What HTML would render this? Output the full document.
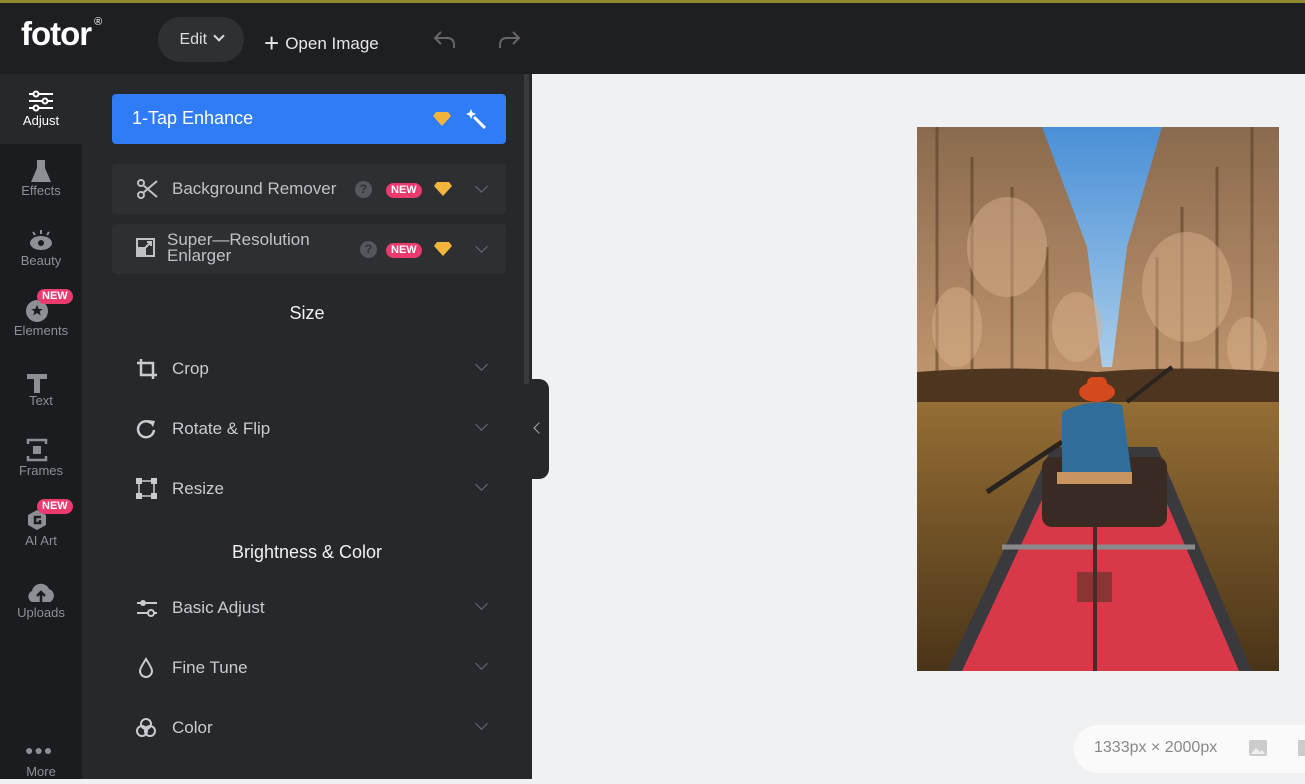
<!DOCTYPE html>
<html><head><meta charset="utf-8"><style>
*{margin:0;padding:0;box-sizing:border-box}
body{width:1305px;height:779px;overflow:hidden;font-family:"Liberation Sans",sans-serif;background:#f0f1f3;position:relative}
.top{position:absolute;left:0;top:0;width:1305px;height:74px;background:#1d1f23;border-top:3px solid #8c8a2e}
.logo{position:absolute;left:21px;top:12px;color:#fff;font-size:33px;font-weight:bold;letter-spacing:-1px}
.logo sup{font-size:11px;font-weight:normal;position:relative;top:-8px;margin-left:3px}
.edit{position:absolute;left:158px;top:14px;width:86px;height:45px;border-radius:23px;background:#2e3034;color:#ddd;font-size:16px;line-height:45px;text-align:center}
.open{position:absolute;left:264px;top:25px;color:#e6e6e6;font-size:17px}
.rail{position:absolute;left:0;top:74px;width:82px;height:705px;background:#1b1c1f}
.ri{position:absolute;left:0;width:82px;height:70px;text-align:center;color:#8d8f94;font-size:13px}
.ri .lb{position:absolute;left:0;right:0;top:39px}
.ri svg{position:absolute;left:26px;top:12px}
.new{position:absolute;background:#ea3a6e;color:#fff;font-size:11px;font-weight:bold;border-radius:8px;padding:1px 5px;line-height:13px}
.panel{position:absolute;left:82px;top:74px;width:450px;height:705px;background:#27282c}
.enh{position:absolute;left:30px;top:20px;width:394px;height:50px;background:#2f7cf6;border-radius:4px;color:#fff;font-size:18px;line-height:48px;padding-left:20px}
.card{position:absolute;left:30px;width:394px;height:50px;background:#2e2f33;border-radius:4px;color:#bfc1c5;font-size:17px}
.row{position:absolute;left:30px;width:394px;height:50px;color:#c9cbcf;font-size:17px}
.row .t,.card .t{position:absolute;left:60px;top:15px}
.row .t{top:17px}
.ic{position:absolute;left:24px;top:14px}
.row .ic{top:16px}
.chev{position:absolute;right:20px;top:18px;width:9px;height:9px;border-right:1.5px solid #6b6d72;border-bottom:1.5px solid #6b6d72;transform:rotate(45deg)}
.h{position:absolute;left:0;width:450px;text-align:center;color:#f0f0f0;font-size:18px}
.q{position:absolute;width:17px;height:17px;border-radius:50%;background:#55575c;color:#2e2f33;font-size:12px;font-weight:bold;text-align:center;line-height:17px}
.scroll{position:absolute;left:524px;top:74px;width:5px;height:310px;background:#3a3b3f;border-radius:2px}
.tab{position:absolute;left:532px;top:379px;width:17px;height:100px;background:#27282c;border-radius:0 10px 10px 0}
.info{position:absolute;left:1074px;top:725px;width:260px;height:48px;border-radius:24px;background:#fafafb;color:#888;font-size:16px;line-height:46px;padding-left:20px}
</style></head><body>
<div class="top">
<div class="logo">fotor<sup>®</sup></div>
<div class="edit">Edit <span style="display:inline-block;width:8px;height:8px;border-right:2px solid #ddd;border-bottom:2px solid #ddd;transform:rotate(45deg);position:relative;top:-4px;margin-left:3px"></span></div>
<div class="open"><span style="font-size:26px;vertical-align:-3px;margin-right:6px">+</span>Open Image</div>
<svg style="position:absolute;left:432px;top:25px" width="26" height="24" viewBox="0 0 26 24"><path d="M9 4 L3 10 L9 16 M3 10 H15 Q22 10 22 17 V20" stroke="#666" stroke-width="2" fill="none"/></svg>
<svg style="position:absolute;left:496px;top:25px" width="26" height="24" viewBox="0 0 26 24"><path d="M17 4 L23 10 L17 16 M23 10 H11 Q4 10 4 17 V20" stroke="#666" stroke-width="2" fill="none"/></svg>
</div>
<div class="rail">
<div class="ri" style="top:0;background:#27282c;color:#fff"><svg width="30" height="30" viewBox="0 0 30 30"><g stroke="#fff" stroke-width="2" fill="#27282c"><path d="M3 8H27M3 15H27M3 22H27"/><circle cx="10" cy="8" r="2.5"/><circle cx="19" cy="15" r="2.5"/><circle cx="10" cy="22" r="2.5"/></g></svg><div class="lb">Adjust</div></div>
<div class="ri" style="top:70px"><svg width="30" height="30" viewBox="0 0 30 30"><path d="M11 4H19V12L25 26H5L11 12Z" fill="#8d8f94"/></svg><div class="lb">Effects</div></div>
<div class="ri" style="top:140px"><svg width="30" height="30" viewBox="0 0 30 30"><ellipse cx="15" cy="17" rx="11" ry="7" fill="#8d8f94"/><circle cx="15" cy="17" r="3" fill="#1b1c1f"/><path d="M15 4V8M7 6L9 9M23 6L21 9" stroke="#8d8f94" stroke-width="2"/></svg><div class="lb">Beauty</div></div>
<div class="ri" style="top:210px"><svg width="30" height="30" viewBox="0 0 30 30"><circle cx="11" cy="15" r="11" fill="#8d8f94"/><path d="M11 9l1.8 4h4l-3.2 2.5 1.2 4-3.8-2.5-3.8 2.5 1.2-4L5.2 13h4z" fill="#1b1c1f"/></svg><div class="lb">Elements</div><span class="new" style="left:37px;top:5px">NEW</span></div>
<div class="ri" style="top:280px"><svg width="30" height="30" viewBox="0 0 30 30"><path d="M1 8H21V13H14V27H8V13H1Z" fill="#8d8f94"/></svg><div class="lb">Text</div></div>
<div class="ri" style="top:350px"><svg width="30" height="30" viewBox="0 0 30 30"><path d="M2 8V4H20V8M2 20V24H20V20" stroke="#8d8f94" stroke-width="2.5" fill="none"/><rect x="7" y="10" width="8" height="8" fill="#8d8f94"/></svg><div class="lb">Frames</div></div>
<div class="ri" style="top:420px"><svg width="30" height="30" viewBox="0 0 30 30"><path d="M11 4L20 9V19L11 24L2 19V9Z" fill="#8d8f94"/><path d="M15 11H9V17H14V14" stroke="#1b1c1f" stroke-width="2.5" fill="none"/></svg><div class="lb">AI Art</div><span class="new" style="left:37px;top:5px">NEW</span></div>
<div class="ri" style="top:492px"><svg width="30" height="30" viewBox="0 0 30 30"><path d="M6 24A6 6 0 0 1 6 13A9 9 0 0 1 23 11A7 7 0 0 1 24 24Z" fill="#8d8f94"/><path d="M15 24V15M11 18L15 14L19 18" stroke="#1b1c1f" stroke-width="2.5" fill="none"/></svg><div class="lb">Uploads</div></div>
<div class="ri" style="top:640px"><div style="position:absolute;left:25px;top:28px;color:#8d8f94;font-size:14px;letter-spacing:1px">●●●</div><div class="lb" style="top:50px">More</div></div>
</div>
<div class="panel">
<div class="enh">1-Tap Enhance
<svg style="position:absolute;left:320px;top:17px" width="20" height="16" viewBox="0 0 20 16"><path d="M4 1H16L19 5L10 15L1 5Z" fill="#f0b53a"/></svg>
<svg style="position:absolute;left:352px;top:13px" width="24" height="24" viewBox="0 0 24 24"><path d="M10 10L21 21" stroke="#fff" stroke-width="3"/><path d="M7 2l1.5 3.5 3.5 1.5-3.5 1.5L7 12 5.5 8.5 2 7l3.5-1.5z" fill="#fff"/></svg></div>
<div class="card" style="top:90px"><svg class="ic" width="24" height="22" viewBox="0 0 24 22"><circle cx="5" cy="5" r="3" stroke="#bfc1c5" stroke-width="2" fill="none"/><circle cx="5" cy="17" r="3" stroke="#bfc1c5" stroke-width="2" fill="none"/><path d="M7 7L21 19M7 15L21 3" stroke="#bfc1c5" stroke-width="2"/></svg><span class="t">Background Remover</span><span class="q" style="left:243px;top:17px">?</span><span class="new" style="left:274px;top:19px">NEW</span><svg style="position:absolute;left:321px;top:17px" width="20" height="16" viewBox="0 0 20 16"><path d="M4 1H16L19 5L10 15L1 5Z" fill="#f0b53a"/></svg><span class="chev"></span></div>
<div class="card" style="top:150px"><svg class="ic" width="20" height="20" viewBox="0 0 20 20"><rect x="1" y="1" width="17" height="17" fill="none" stroke="#bfc1c5" stroke-width="2"/><rect x="1" y="9" width="9" height="9" fill="#bfc1c5"/><path d="M9 10L15 4M11 4H15V8" stroke="#bfc1c5" stroke-width="2" fill="none"/></svg><span class="t" style="left:55px;top:8px;line-height:16px">Super—Resolution<br>Enlarger</span><span class="q" style="left:248px;top:17px">?</span><span class="new" style="left:274px;top:19px">NEW</span><svg style="position:absolute;left:321px;top:17px" width="20" height="16" viewBox="0 0 20 16"><path d="M4 1H16L19 5L10 15L1 5Z" fill="#f0b53a"/></svg><span class="chev"></span></div>
<div class="h" style="top:229px">Size</div>
<div class="row" style="top:268px"><svg class="ic" width="22" height="22" viewBox="0 0 22 22"><path d="M5 1V17H21M1 5H17V21" stroke="#c9cbcf" stroke-width="2.5" fill="none"/></svg><span class="t">Crop</span><span class="chev"></span></div>
<div class="row" style="top:328px"><svg class="ic" width="22" height="22" viewBox="0 0 22 22"><path d="M18 12A8 8 0 1 1 15 5" stroke="#c9cbcf" stroke-width="2.5" fill="none"/><path d="M12 2L19 3L17 9Z" fill="#c9cbcf"/></svg><span class="t">Rotate &amp; Flip</span><span class="chev"></span></div>
<div class="row" style="top:388px"><svg class="ic" width="22" height="22" viewBox="0 0 22 22"><rect x="3" y="3" width="15" height="15" fill="none" stroke="#c9cbcf" stroke-width="1.5"/><g fill="#c9cbcf"><rect x="0" y="0" width="6" height="6"/><rect x="15" y="0" width="6" height="6"/><rect x="0" y="15" width="6" height="6"/><rect x="15" y="15" width="6" height="6"/></g></svg><span class="t">Resize</span><span class="chev"></span></div>
<div class="h" style="top:468px">Brightness &amp; Color</div>
<div class="row" style="top:507px"><svg class="ic" width="22" height="22" viewBox="0 0 22 22"><path d="M1 6H21M1 16H21" stroke="#c9cbcf" stroke-width="2"/><circle cx="7" cy="6" r="3" fill="#c9cbcf"/><circle cx="15" cy="16" r="3" fill="#27282c" stroke="#c9cbcf" stroke-width="2"/></svg><span class="t">Basic Adjust</span><span class="chev"></span></div>
<div class="row" style="top:567px"><svg class="ic" width="22" height="22" viewBox="0 0 22 22"><path d="M10 2C7 7 4 11 4 14A6 6 0 0 0 16 14C16 11 13 7 10 2Z" stroke="#c9cbcf" stroke-width="2" fill="none"/></svg><span class="t">Fine Tune</span><span class="chev"></span></div>
<div class="row" style="top:627px"><svg class="ic" width="22" height="22" viewBox="0 0 22 22"><g stroke="#c9cbcf" stroke-width="2" fill="none"><circle cx="10" cy="7" r="5"/><circle cx="6" cy="14" r="5"/><circle cx="14" cy="14" r="5"/></g></svg><span class="t">Color</span><span class="chev"></span></div>
</div>
<div class="scroll"></div>
<div class="tab"><span style="position:absolute;left:3px;top:45px;width:8px;height:8px;border-left:1.5px solid #aaa;border-bottom:1.5px solid #aaa;transform:rotate(45deg)"></span></div>
<svg style="position:absolute;left:917px;top:127px" width="362" height="544" viewBox="0 0 362 544">
<defs>
<linearGradient id="sky" x1="0" y1="0" x2="0" y2="1"><stop offset="0" stop-color="#4a8fd6"/><stop offset="1" stop-color="#a9cdea"/></linearGradient>
<linearGradient id="water" x1="0" y1="0" x2="0" y2="1"><stop offset="0" stop-color="#9a7236"/><stop offset="1" stop-color="#4a3418"/></linearGradient>
<linearGradient id="trees" x1="0" y1="0" x2="0" y2="1"><stop offset="0" stop-color="#8a6a4e"/><stop offset="0.5" stop-color="#c49870"/><stop offset="1" stop-color="#6b4a2c"/></linearGradient>
</defs>
<rect width="362" height="544" fill="url(#trees)"/>
<path d="M125 0H245L210 120L195 240L185 240L170 120Z" fill="url(#sky)"/>
<g stroke="#5c4026" stroke-width="3" opacity="0.6">
<path d="M20 0V260M55 30V250M95 60V255M300 40V255M335 0V260M265 80V250M130 120V250M240 130V250"/></g>
<g fill="#d8b08a" opacity="0.5"><ellipse cx="90" cy="120" rx="40" ry="50"/><ellipse cx="270" cy="160" rx="45" ry="55"/><ellipse cx="160" cy="200" rx="25" ry="35"/><ellipse cx="40" cy="200" rx="25" ry="40"/><ellipse cx="330" cy="220" rx="20" ry="30"/></g>
<rect y="255" width="362" height="289" fill="url(#water)"/>
<path d="M0 245Q90 238 180 245Q270 238 362 245V275H0Z" fill="#4d3520"/>
<path d="M30 544L135 320H240L335 544Z" fill="#3a3a3e"/>
<path d="M45 544L145 330H230L322 544Z" fill="#d83848"/>
<rect x="125" y="330" width="125" height="70" rx="10" fill="#3a2a24"/>
<path d="M70 365L145 315" stroke="#2a2420" stroke-width="5"/>
<path d="M210 275L255 240" stroke="#2a2420" stroke-width="4"/>
<path d="M145 285Q175 270 205 278L215 350H145Z" fill="#2f6d9a"/>
<rect x="140" y="345" width="75" height="12" fill="#c89560"/>
<ellipse cx="180" cy="265" rx="18" ry="10" fill="#d44a1e"/>
<rect x="170" y="250" width="20" height="15" rx="6" fill="#d44a1e"/>
<path d="M85 420H278" stroke="#8a8a8a" stroke-width="5"/>
<rect x="160" y="445" width="35" height="30" fill="#8a3434"/>
<path d="M178 400V544" stroke="#4a2a28" stroke-width="4"/>
</svg>
<div class="info">1333px × 2000px<svg style="position:absolute;left:175px;top:15px" width="18" height="16" viewBox="0 0 18 16"><rect width="18" height="16" rx="2" fill="#ccc"/><path d="M2 14L7 8L11 12L13 10L16 14Z" fill="#eee"/></svg><span style="position:absolute;left:224px;top:15px;width:10px;height:16px;background:#ccc"></span></div>
</body></html>
